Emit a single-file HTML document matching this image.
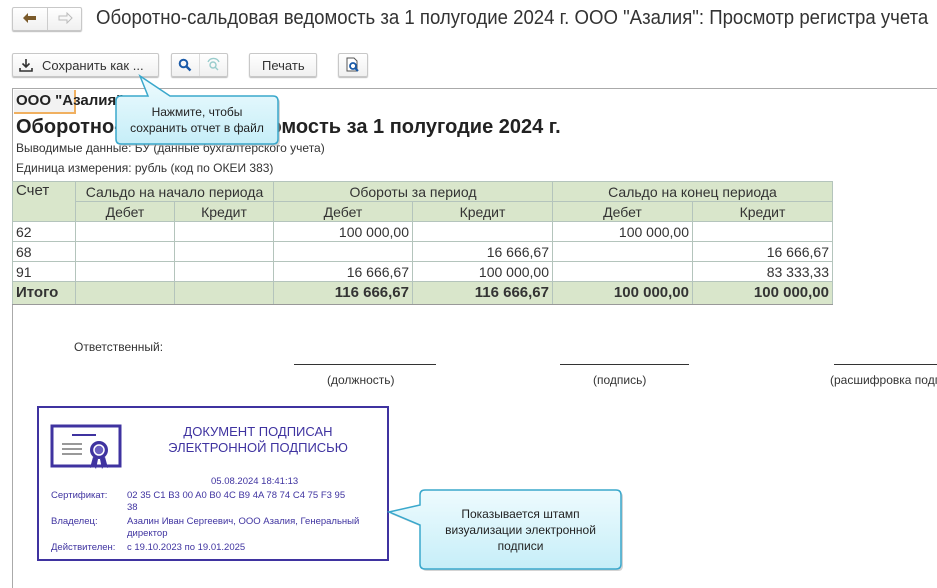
<!DOCTYPE html>
<html><head><meta charset="utf-8">
<style>
*{box-sizing:border-box;margin:0;padding:0}
html,body{width:937px;height:588px;overflow:hidden}
body{background:#fff;font-family:"Liberation Sans",Arial,sans-serif;color:#333;position:relative}
.a{position:absolute;white-space:nowrap}
.btn{position:absolute;border:1px solid #c8c8c8;border-radius:2px;background:linear-gradient(#fff,#f0f0f0);box-shadow:0 1px 1px #bbb}
.t{position:absolute;border-collapse:collapse;left:12px;top:181px;font-size:14px;color:#333}
.t td{border:1px solid #b4c4bc;height:20px;padding:0 3px;line-height:18px}
.h td{background:#d9e6cb;text-align:center}
.r{text-align:right}
.tot td{background:#d9e6cb;font-weight:bold;font-size:15px;height:23px;border-bottom:1px solid #999}
.st{color:#3f33a0;font-size:9.5px}
.clip{position:absolute;overflow:hidden}
</style></head><body>
<!-- nav -->
<div class="btn" style="left:12px;top:7px;width:70px;height:24px"></div>
<div class="a" style="left:47px;top:8px;width:1px;height:22px;background:#ccc"></div>
<svg class="a" style="left:22px;top:12px" width="16" height="12"><path d="M1 6 L6 1 V4 H14 V8 H6 V11 Z" fill="#7a5a2a"/></svg>
<svg class="a" style="left:57px;top:12px" width="16" height="12"><path d="M15 6 L10 1 V4 H2 V8 H10 V11 Z" fill="none" stroke="#bbb"/></svg>
<div class="clip" style="left:96px;top:5px;width:841px;height:28px">
<div class="a" style="left:0;top:2px;font-size:20px;color:#333;transform:scaleX(0.93);transform-origin:0 0">Оборотно-сальдовая ведомость за 1 полугодие 2024 г. ООО "Азалия": Просмотр регистра учета</div>
</div>
<!-- toolbar -->
<div class="btn" style="left:12px;top:53px;width:147px;height:24px"></div>
<svg class="a" style="left:19px;top:58px" width="14" height="14"><path d="M7 1V9 M3.5 5.5 L7 9 L10.5 5.5 M1 10V13H13V10" stroke="#333" stroke-width="1.6" fill="none"/></svg>
<div class="a" style="left:42px;top:58px;font-size:13px">Сохранить как ...</div>
<div class="btn" style="left:171px;top:53px;width:57px;height:24px"></div>
<div class="a" style="left:199px;top:54px;width:1px;height:22px;background:#ddd"></div>
<svg class="a" style="left:178px;top:58px" width="14" height="14"><circle cx="5.5" cy="5.5" r="3.8" stroke="#1a5aa8" stroke-width="2" fill="none"/><path d="M8.5 8.5L12.5 12.5" stroke="#1a5aa8" stroke-width="2.4"/></svg>
<svg class="a" style="left:206px;top:57px" width="16" height="16"><circle cx="7" cy="8" r="3" stroke="#9cc" stroke-width="1.4" fill="none"/><path d="M9 10L12 13 M2 5 A6 6 0 0 1 13 5" stroke="#9cc" stroke-width="1.4" fill="none"/></svg>
<div class="btn" style="left:249px;top:53px;width:68px;height:24px"></div>
<div class="a" style="left:262px;top:58px;font-size:13px">Печать</div>
<div class="btn" style="left:338px;top:53px;width:30px;height:24px"></div>
<svg class="a" style="left:345px;top:57px" width="16" height="16"><path d="M2 1H9L12 4V14H2Z" fill="#fff" stroke="#555"/><circle cx="8" cy="9" r="3" stroke="#1a5aa8" stroke-width="1.8" fill="none"/><path d="M10 11L13 14" stroke="#1a5aa8" stroke-width="2"/></svg>
<!-- report frame -->
<div class="a" style="left:12px;top:88px;width:925px;height:1px;background:#aaa"></div>
<div class="a" style="left:12px;top:88px;width:1px;height:500px;background:#aaa"></div>
<div class="a" style="left:14px;top:90px;width:62px;height:24px;background:#f2f2f2;border-right:2px solid #f0b060;border-bottom:2px solid #f0b060"></div>
<div class="a" style="left:16px;top:92px;font-size:15px;font-weight:bold;color:#222">ООО "Азалия"</div>
<div class="a" style="left:16px;top:116px;font-size:20px;font-weight:bold;color:#222">Оборотно-сальдовая ведомость за 1 полугодие 2024 г.</div>
<div class="a" style="left:16px;top:141px;font-size:12px">Выводимые данные: БУ (данные бухгалтерского учета)</div>
<div class="a" style="left:16px;top:161px;font-size:12px">Единица измерения: рубль (код по ОКЕИ 383)</div>
<table class="t">
<tr class="h"><td rowspan="2" style="width:63px;text-align:left;vertical-align:top;font-size:15px">Счет</td><td colspan="2">Сальдо на начало периода</td><td colspan="2">Обороты за период</td><td colspan="2">Сальдо на конец периода</td></tr>
<tr class="h"><td style="width:99px">Дебет</td><td style="width:99px">Кредит</td><td style="width:139px">Дебет</td><td style="width:140px">Кредит</td><td style="width:140px">Дебет</td><td style="width:140px">Кредит</td></tr>
<tr><td>62</td><td></td><td></td><td class="r">100 000,00</td><td></td><td class="r">100 000,00</td><td></td></tr>
<tr><td>68</td><td></td><td></td><td></td><td class="r">16 666,67</td><td></td><td class="r">16 666,67</td></tr>
<tr><td>91</td><td></td><td></td><td class="r">16 666,67</td><td class="r">100 000,00</td><td></td><td class="r">83 333,33</td></tr>
<tr class="tot"><td>Итого</td><td></td><td></td><td class="r">116 666,67</td><td class="r">116 666,67</td><td class="r">100 000,00</td><td class="r">100 000,00</td></tr>
</table>
<!-- signatures -->
<div class="a" style="left:74px;top:340px;font-size:12px">Ответственный:</div>
<div class="a" style="left:294px;top:364px;width:142px;height:1px;background:#333"></div>
<div class="a" style="left:560px;top:364px;width:129px;height:1px;background:#333"></div>
<div class="a" style="left:834px;top:364px;width:103px;height:1px;background:#333"></div>
<div class="a" style="left:327px;top:373px;font-size:12px">(должность)</div>
<div class="a" style="left:593px;top:373px;font-size:12px">(подпись)</div>
<div class="clip" style="left:830px;top:370px;width:107px;height:20px"><div class="a" style="left:0;top:3px;font-size:12px">(расшифровка подписи)</div></div>
<!-- stamp -->
<div class="a" style="left:37px;top:406px;width:352px;height:155px;border:2px solid #3f33a0"></div>
<svg class="a" style="left:50px;top:424px" width="72" height="56"><rect x="2" y="2" width="68" height="40" fill="none" stroke="#3f33a0" stroke-width="3"/><path d="M22 11H46" stroke="#3f33a0" stroke-width="2"/><path d="M12 20H32M12 25H32M12 30H32" stroke="#999" stroke-width="2"/><rect x="38" y="14" width="22" height="26" fill="#fff"/><circle cx="49" cy="26" r="9" fill="#3f33a0"/><circle cx="49" cy="26" r="5" fill="#6a5fc0" stroke="#fff" stroke-width="1.5"/><path d="M43 33L40 44L44 42L46 45L48 35Z M55 33L58 44L54 42L52 45L50 35Z" fill="#3f33a0"/></svg>
<div class="a st" style="left:140px;top:424px;width:236px;text-align:center;font-size:13px;line-height:16px;white-space:normal">ДОКУМЕНТ ПОДПИСАН<br>ЭЛЕКТРОННОЙ ПОДПИСЬЮ</div>
<div class="a st" style="left:211px;top:476px">05.08.2024 18:41:13</div>
<div class="a st" style="left:51px;top:490px">Сертификат:</div>
<div class="a st" style="left:127px;top:490px;line-height:12px">02 35 C1 B3 00 A0 B0 4C B9 4A 78 74 C4 75 F3 95<br>38</div>
<div class="a st" style="left:51px;top:516px">Владелец:</div>
<div class="a st" style="left:127px;top:516px;line-height:12px">Азалин Иван Сергеевич, ООО Азалия, Генеральный<br>директор</div>
<div class="a st" style="left:51px;top:542px">Действителен:</div>
<div class="a st" style="left:127px;top:542px">с 19.10.2023 по 19.01.2025</div>
<!-- tooltips -->
<svg class="a" style="left:0;top:0" width="937" height="588">
<defs><linearGradient id="g" x1="0" y1="0" x2="0" y2="1"><stop offset="0" stop-color="#eefbfe"/><stop offset="1" stop-color="#c6eef8"/></linearGradient></defs>
<path d="M121 96 H148 L140 76 L170 96 H273 Q278 96 278 101 V139 Q278 144 273 144 H121 Q116 144 116 139 V101 Q116 96 121 96Z" fill="#aaa" opacity=".5" transform="translate(2,2)"/>
<path d="M121 96 H148 L140 76 L170 96 H273 Q278 96 278 101 V139 Q278 144 273 144 H121 Q116 144 116 139 V101 Q116 96 121 96Z" fill="url(#g)" stroke="#3aa8cc" stroke-width="1.5"/>
<path d="M425 490 H616 Q621 490 621 495 V564 Q621 569 616 569 H425 Q420 569 420 564 V525 L389 512 L420 505 V495 Q420 490 425 490Z" fill="#aaa" opacity=".5" transform="translate(2,2)"/>
<path d="M425 490 H616 Q621 490 621 495 V564 Q621 569 616 569 H425 Q420 569 420 564 V525 L389 512 L420 505 V495 Q420 490 425 490Z" fill="url(#g)" stroke="#3aa8cc" stroke-width="1.5"/>
</svg>
<div class="a" style="left:116px;top:104px;width:162px;text-align:center;font-size:12px;line-height:16px;color:#222">Нажмите, чтобы<br>сохранить отчет в файл</div>
<div class="a" style="left:420px;top:506px;width:201px;text-align:center;font-size:12px;line-height:16px;color:#222">Показывается штамп<br>визуализации электронной<br>подписи</div>
</body></html>
